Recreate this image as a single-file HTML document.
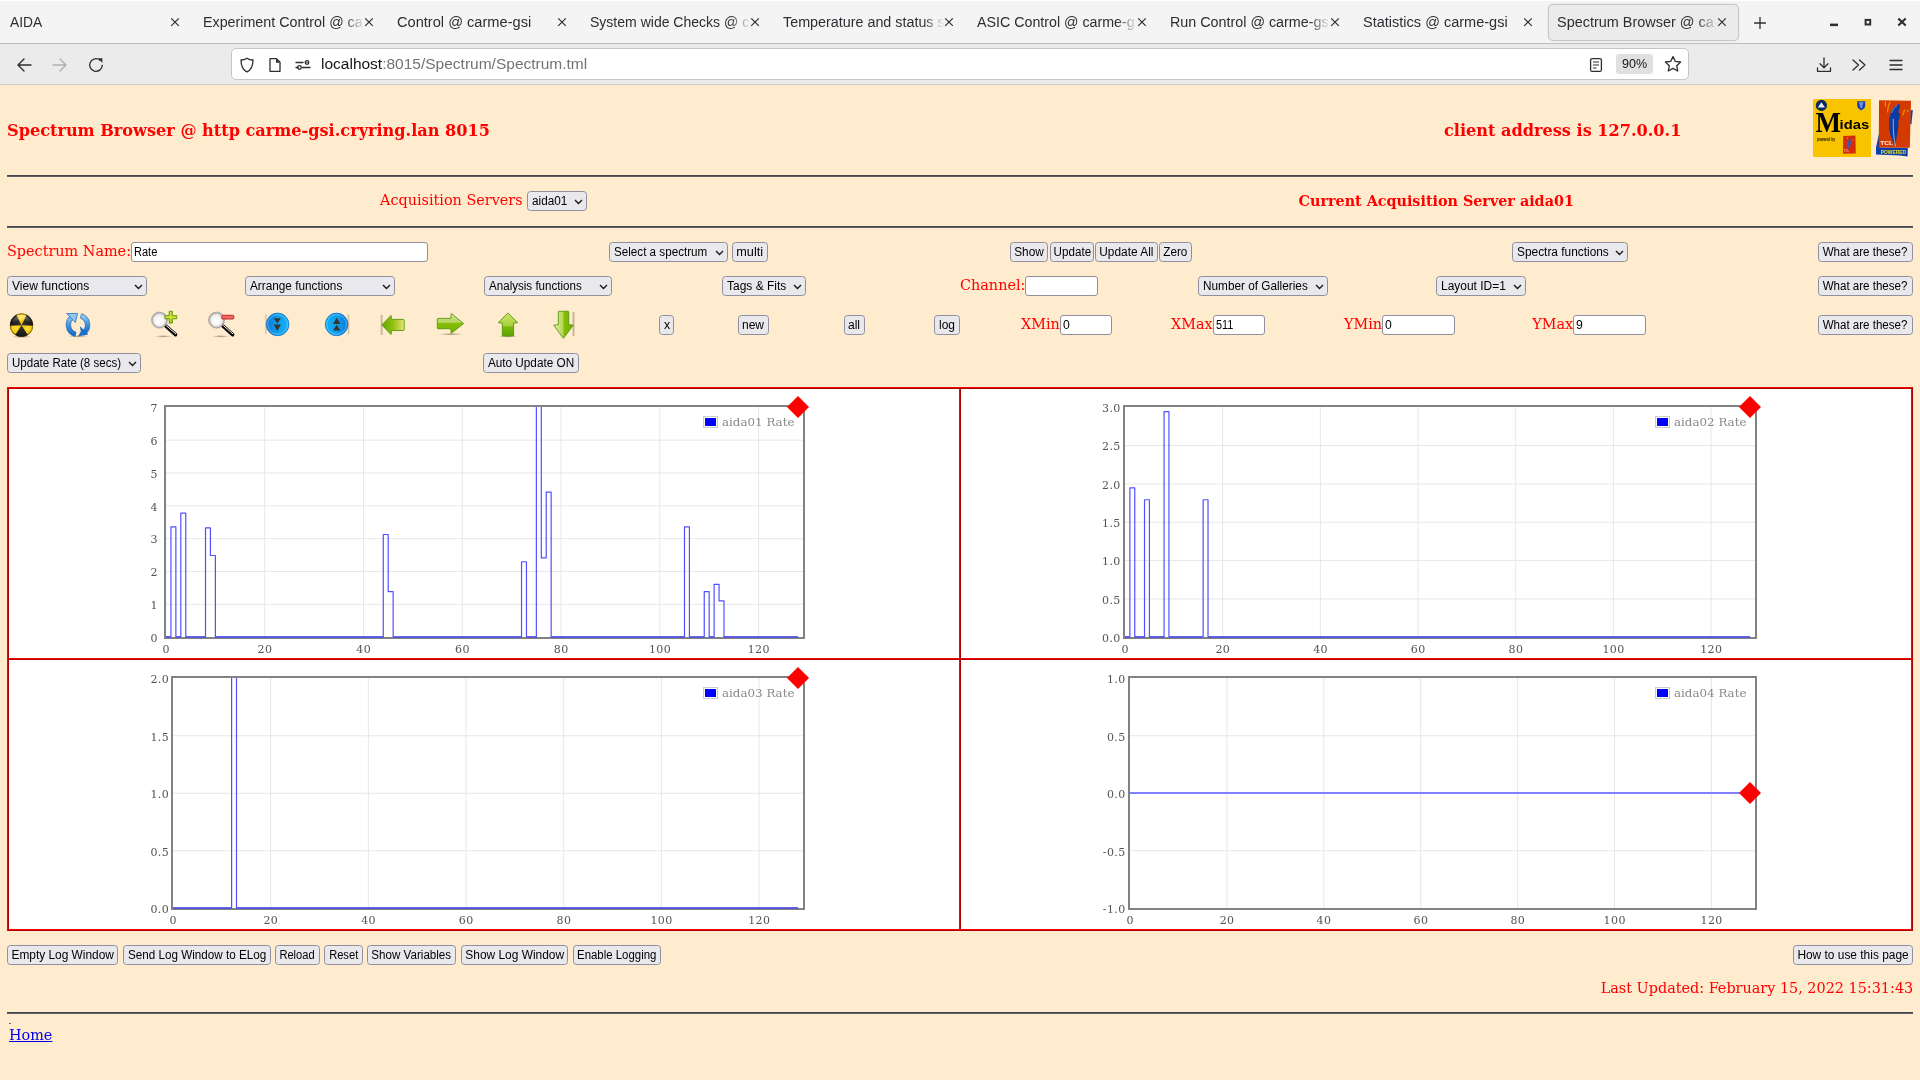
<!DOCTYPE html>
<html lang="en"><head><meta charset="utf-8"><title>Spectrum Browser @ carme-gsi</title>
<style>
*{box-sizing:border-box}
html,body{margin:0;padding:0}
body{width:1920px;height:1080px;overflow:hidden;position:relative;background:#ffebcd;font-family:"DejaVu Serif","Liberation Serif",serif;font-size:14.4px;color:#ff0000}
#root{position:absolute;left:0;top:0;width:1920px;height:1080px;will-change:transform}
.a{position:absolute;white-space:nowrap}
.ui{font-family:"Liberation Sans","DejaVu Sans",sans-serif;color:#15141a}
#tabbar{left:0;top:0;width:1920px;height:43px;background:#f4f4f4;border-top:1px solid #fff}
#tabline{left:0;top:43px;width:1920px;height:1px;background:#bdbdbd}
#navbar{left:0;top:44px;width:1920px;height:40px;background:#ebebeb}
#navline{left:0;top:84px;width:1920px;height:1px;background:#d4d0c8}
.tab{top:0;height:43px;font-size:15.2px;line-height:44.5px;color:#2b2f33;overflow:hidden}
.fade{-webkit-mask-image:linear-gradient(to right,#000 calc(100% - 22px),transparent 100%);mask-image:linear-gradient(to right,#000 calc(100% - 22px),transparent 100%)}
.tx{top:0;height:43px;line-height:43px}
#atab{left:1548px;top:3.5px;width:191px;height:37px;background:#ebebeb;border:1px solid #c6c6cc;border-radius:5px;box-shadow:0 0 2px rgba(0,0,0,.12)}
#url{left:231px;top:48px;width:1458px;height:32px;background:#fff;border:1px solid #c6c6c6;border-radius:5px}
.btn{height:20px;border:1px solid #8f8f9d;border-radius:3.5px;background:#e9e9ed;font-family:"Liberation Sans","DejaVu Sans",sans-serif;font-size:12px;color:#000;line-height:19px;text-align:center;padding:0}
.sel{height:20px;border:1px solid #8f8f9d;border-radius:3.5px;background:#e9e9ed;font-family:"Liberation Sans","DejaVu Sans",sans-serif;font-size:12px;color:#000;line-height:19px;padding-left:4px}
.inp{height:20px;border:1px solid #8f8f9d;border-radius:3px;background:#fff;font-family:"Liberation Sans","DejaVu Sans",sans-serif;font-size:12px;color:#000;line-height:19px;padding-left:2px}
.hr{left:7px;width:1906px;height:2px;background:linear-gradient(#43464a 50%,#5c5f63 50%)}
.lbl{font-size:14.4px;line-height:20px;height:20px}
</style></head>
<body>
<div id="root">
<div class="a" id="tabbar"></div><div class="a" id="tabline"></div><div class="a" id="navbar"></div><div class="a" id="navline"></div>
<div class="a" id="atab"></div>
<div class="a ui tab" style="left:10px;width:172.5px;transform:scaleX(0.9100);transform-origin:left">AIDA</div>
<svg class="a" style="left:170.2px;top:17px" width="10" height="10" viewBox="0 0 10 10"><path d="M1.2 1.3L8.8 8.9M8.8 1.3L1.2 8.9" stroke="#2e2e2e" stroke-width="1.2" fill="none"/></svg>
<div class="a ui tab fade" style="left:203px;width:171.8px;transform:scaleX(0.9400);transform-origin:left">Experiment Control @ ca</div>
<svg class="a" style="left:364.2px;top:17px" width="10" height="10" viewBox="0 0 10 10"><path d="M1.2 1.3L8.8 8.9M8.8 1.3L1.2 8.9" stroke="#2e2e2e" stroke-width="1.2" fill="none"/></svg>
<div class="a ui tab" style="left:397px;width:163.2px;transform:scaleX(0.9620);transform-origin:left">Control @ carme-gsi</div>
<svg class="a" style="left:557.2px;top:17px" width="10" height="10" viewBox="0 0 10 10"><path d="M1.2 1.3L8.8 8.9M8.8 1.3L1.2 8.9" stroke="#2e2e2e" stroke-width="1.2" fill="none"/></svg>
<div class="a ui tab fade" style="left:590px;width:173.9px;transform:scaleX(0.9232);transform-origin:left">System wide Checks @ c</div>
<svg class="a" style="left:750.2px;top:17px" width="10" height="10" viewBox="0 0 10 10"><path d="M1.2 1.3L8.8 8.9M8.8 1.3L1.2 8.9" stroke="#2e2e2e" stroke-width="1.2" fill="none"/></svg>
<div class="a ui tab fade" style="left:783px;width:171.2px;transform:scaleX(0.9434);transform-origin:left">Temperature and status s</div>
<svg class="a" style="left:944.2px;top:17px" width="10" height="10" viewBox="0 0 10 10"><path d="M1.2 1.3L8.8 8.9M8.8 1.3L1.2 8.9" stroke="#2e2e2e" stroke-width="1.2" fill="none"/></svg>
<div class="a ui tab fade" style="left:977px;width:171.2px;transform:scaleX(0.9375);transform-origin:left">ASIC Control @ carme-g</div>
<svg class="a" style="left:1137.2px;top:17px" width="10" height="10" viewBox="0 0 10 10"><path d="M1.2 1.3L8.8 8.9M8.8 1.3L1.2 8.9" stroke="#2e2e2e" stroke-width="1.2" fill="none"/></svg>
<div class="a ui tab fade" style="left:1170px;width:170.1px;transform:scaleX(0.9434);transform-origin:left">Run Control @ carme-gs</div>
<svg class="a" style="left:1330.2px;top:17px" width="10" height="10" viewBox="0 0 10 10"><path d="M1.2 1.3L8.8 8.9M8.8 1.3L1.2 8.9" stroke="#2e2e2e" stroke-width="1.2" fill="none"/></svg>
<div class="a ui tab" style="left:1363px;width:164.2px;transform:scaleX(0.9560);transform-origin:left">Statistics @ carme-gsi</div>
<svg class="a" style="left:1523.2px;top:17px" width="10" height="10" viewBox="0 0 10 10"><path d="M1.2 1.3L8.8 8.9M8.8 1.3L1.2 8.9" stroke="#2e2e2e" stroke-width="1.2" fill="none"/></svg>
<div class="a ui tab fade" style="left:1557px;width:168.8px;transform:scaleX(0.9506);transform-origin:left">Spectrum Browser @ ca</div>
<svg class="a" style="left:1717.2px;top:17px" width="10" height="10" viewBox="0 0 10 10"><path d="M1.2 1.3L8.8 8.9M8.8 1.3L1.2 8.9" stroke="#2e2e2e" stroke-width="1.2" fill="none"/></svg>
<svg class="a" style="left:1753.7px;top:16.8px" width="12" height="12" viewBox="0 0 12 12"><path d="M6 0.1V11.9M0.1 6H11.9" stroke="#2e2e2e" stroke-width="1.3" fill="none"/></svg>
<svg class="a" style="left:1828px;top:18px" width="12" height="10" viewBox="0 0 12 10"><rect x="2" y="5.6" width="8" height="2.5" fill="#2e2e2e"/></svg>
<svg class="a" style="left:1862px;top:16px" width="12" height="12" viewBox="0 0 12 12"><rect x="3.6" y="3.9" width="4.6" height="4.6" fill="none" stroke="#2e2e2e" stroke-width="2"/></svg>
<svg class="a" style="left:1897px;top:17px" width="10" height="10" viewBox="0 0 10 10"><path d="M1.3 1.4L8.7 8.6M8.7 1.4L1.3 8.6" stroke="#2e2e2e" stroke-width="2.1" fill="none"/></svg>
<svg class="a" style="left:16px;top:56.7px" width="16" height="16" viewBox="0 0 16 16"><path d="M15 8H2M8 2L2 8L8 14" stroke="#2e2e2e" stroke-width="1.4" fill="none" stroke-linecap="round" stroke-linejoin="round"/></svg>
<svg class="a" style="left:52px;top:56.7px" width="16" height="16" viewBox="0 0 16 16"><path d="M1 8H14M8 2L14 8L8 14" stroke="#b0b0b0" stroke-width="1.4" fill="none" stroke-linecap="round" stroke-linejoin="round"/></svg>
<svg class="a" style="left:88px;top:56.7px" width="16" height="16" viewBox="0 0 16 16"><path d="M14.3 8.3A6.3 6.3 0 1 1 12.1 3.2" stroke="#2e2e2e" stroke-width="1.35" fill="none" stroke-linecap="round"/><path d="M10 1.3H14.4V5.9Z" fill="#2e2e2e"/></svg>
<div class="a" id="url"></div>
<svg class="a" style="left:239px;top:56.7px" width="16" height="16" viewBox="0 0 16 16"><path d="M8 1.2C6 2.6 4 3 2 3C2 9 4 13 8 14.8C12 13 14 9 14 3C12 3 10 2.6 8 1.2Z" stroke="#2e2e2e" stroke-width="1.3" fill="none" stroke-linejoin="round"/></svg>
<svg class="a" style="left:267px;top:56.7px" width="16" height="16" viewBox="0 0 16 16"><path d="M3 1.7H9.5L13 5.2V14.3H3Z" stroke="#2e2e2e" stroke-width="1.3" fill="none" stroke-linejoin="round"/><path d="M9 1.7V5.7H13Z" fill="#2e2e2e"/></svg>
<svg class="a" style="left:295px;top:56.7px" width="16" height="16" viewBox="0 0 16 16"><path d="M1 5.5H8M12 5.5H12M1 10.5H3M7 10.5H15" stroke="#2e2e2e" stroke-width="1.3" fill="none" stroke-linecap="round"/><circle cx="12" cy="5.5" r="1.8" stroke="#2e2e2e" stroke-width="1.3" fill="none"/><circle cx="4.5" cy="10.5" r="1.8" stroke="#2e2e2e" stroke-width="1.3" fill="none"/></svg>
<div class="a ui" style="left:321px;top:48px;height:32px;line-height:32px;font-size:15.5px;color:#15141a">localhost<span style="color:#737373">:8015/Spectrum/Spectrum.tml</span></div>
<svg class="a" style="left:1588px;top:56.7px" width="16" height="16" viewBox="0 0 16 16"><rect x="2.6" y="1.6" width="10.8" height="12.8" rx="1.5" stroke="#2e2e2e" stroke-width="1.3" fill="none"/><path d="M5 5H11M5 8H11M5 11H8.5" stroke="#2e2e2e" stroke-width="1.2" fill="none"/></svg>
<div class="a ui" style="left:1616px;top:54px;width:37px;height:20px;background:#e0e0e0;border-radius:3px;font-size:12.5px;line-height:20px;text-align:center;color:#15141a">90%</div>
<svg class="a" style="left:1664px;top:55px" width="18" height="18" viewBox="0 0 18 18"><path d="M9 1.5L11.3 6.4L16.6 7L12.7 10.7L13.7 16L9 13.4L4.3 16L5.3 10.7L1.4 7L6.7 6.4Z" stroke="#2e2e2e" stroke-width="1.3" fill="none" stroke-linejoin="round"/></svg>
<svg class="a" style="left:1816px;top:56.7px" width="16" height="16" viewBox="0 0 16 16"><path d="M8 1V10.5M4 6.8L8 10.8L12 6.8M1.5 11V14.3H14.5V11" stroke="#2e2e2e" stroke-width="1.3" fill="none" stroke-linecap="round" stroke-linejoin="round"/></svg>
<svg class="a" style="left:1851px;top:56.7px" width="16" height="16" viewBox="0 0 16 16"><path d="M2 3L7.5 8L2 13M8.5 3L14 8L8.5 13" stroke="#2e2e2e" stroke-width="1.3" fill="none" stroke-linecap="round" stroke-linejoin="round"/></svg>
<svg class="a" style="left:1888px;top:56.7px" width="16" height="16" viewBox="0 0 16 16"><path d="M2 3.5H14M2 8H14M2 12.5H14" stroke="#2e2e2e" stroke-width="1.3" fill="none" stroke-linecap="round"/></svg>
<div class="a" style="left:7px;top:119px;font-size:16.13px;font-weight:bold;line-height:24px">Spectrum Browser @ http carme-gsi.cryring.lan 8015</div>
<div class="a" style="left:1444px;top:119px;font-size:16.13px;font-weight:bold;line-height:24px">client address is 127.0.0.1</div>
<div class="a hr" style="top:175px"></div>
<div class="a lbl" style="left:380px;top:190px">Acquisition Servers</div>
<div class="a" style="left:1298.6px;top:191px;font-weight:bold;font-size:14.33px;line-height:20px">Current Acquisition Server aida01</div>
<div class="a hr" style="top:226px"></div>
<div class="a sel" style="left:527px;top:191px;width:60px"><span style="display:inline-block;transform:scaleX(0.979);transform-origin:left">aida01</span></div>
<svg class="a" style="left:573.8px;top:198.7px" width="9" height="6" viewBox="0 0 9 6"><path d="M1 1L4.5 4.5L8 1" stroke="#1a1a1a" stroke-width="1.4" fill="none"/></svg>
<div class="a lbl" style="left:7.0px;top:241px">Spectrum Name:</div>
<div class="a inp" style="left:131px;top:242px;width:297px"><span style="display:inline-block;transform:scaleX(0.919);transform-origin:left">Rate</span></div>
<div class="a sel" style="left:609px;top:242px;width:119px"><span style="display:inline-block;transform:scaleX(0.971);transform-origin:left">Select a spectrum</span></div>
<svg class="a" style="left:714.8px;top:249.7px" width="9" height="6" viewBox="0 0 9 6"><path d="M1 1L4.5 4.5L8 1" stroke="#1a1a1a" stroke-width="1.4" fill="none"/></svg>
<div class="a btn" style="left:732px;top:242px;width:36px"><span style="display:inline-block;transform:scaleX(1.057);transform-origin:center">multi</span></div>
<div class="a btn" style="left:1010px;top:242px;width:38px"><span style="display:inline-block;transform:scaleX(0.984);transform-origin:center">Show</span></div>
<div class="a btn" style="left:1050px;top:242px;width:44px"><span style="display:inline-block;transform:scaleX(0.969);transform-origin:center">Update</span></div>
<div class="a btn" style="left:1095px;top:242px;width:63px"><span style="display:inline-block;transform:scaleX(0.989);transform-origin:center">Update All</span></div>
<div class="a btn" style="left:1159px;top:242px;width:33px"><span style="display:inline-block;transform:scaleX(0.976);transform-origin:center">Zero</span></div>
<div class="a sel" style="left:1512px;top:242px;width:116px"><span style="display:inline-block;transform:scaleX(0.990);transform-origin:left">Spectra functions</span></div>
<svg class="a" style="left:1614.8px;top:249.7px" width="9" height="6" viewBox="0 0 9 6"><path d="M1 1L4.5 4.5L8 1" stroke="#1a1a1a" stroke-width="1.4" fill="none"/></svg>
<div class="a btn" style="left:1818px;top:242px;width:95px"><span style="display:inline-block;transform:scaleX(0.963);transform-origin:center">What are these?</span></div>
<div class="a sel" style="left:7px;top:276px;width:140px"><span style="display:inline-block;transform:scaleX(1.002);transform-origin:left">View functions</span></div>
<svg class="a" style="left:133.8px;top:283.7px" width="9" height="6" viewBox="0 0 9 6"><path d="M1 1L4.5 4.5L8 1" stroke="#1a1a1a" stroke-width="1.4" fill="none"/></svg>
<div class="a sel" style="left:245px;top:276px;width:150px"><span style="display:inline-block;transform:scaleX(0.981);transform-origin:left">Arrange functions</span></div>
<svg class="a" style="left:381.8px;top:283.7px" width="9" height="6" viewBox="0 0 9 6"><path d="M1 1L4.5 4.5L8 1" stroke="#1a1a1a" stroke-width="1.4" fill="none"/></svg>
<div class="a sel" style="left:484px;top:276px;width:128px"><span style="display:inline-block;transform:scaleX(0.966);transform-origin:left">Analysis functions</span></div>
<svg class="a" style="left:598.8px;top:283.7px" width="9" height="6" viewBox="0 0 9 6"><path d="M1 1L4.5 4.5L8 1" stroke="#1a1a1a" stroke-width="1.4" fill="none"/></svg>
<div class="a sel" style="left:722px;top:276px;width:84px"><span style="display:inline-block;transform:scaleX(0.999);transform-origin:left">Tags &amp; Fits</span></div>
<svg class="a" style="left:792.8px;top:283.7px" width="9" height="6" viewBox="0 0 9 6"><path d="M1 1L4.5 4.5L8 1" stroke="#1a1a1a" stroke-width="1.4" fill="none"/></svg>
<div class="a lbl" style="left:960.0px;top:275px">Channel:</div>
<div class="a inp" style="left:1025px;top:276px;width:73px"></div>
<div class="a sel" style="left:1198px;top:276px;width:130px"><span style="display:inline-block;transform:scaleX(0.982);transform-origin:left">Number of Galleries</span></div>
<svg class="a" style="left:1314.8px;top:283.7px" width="9" height="6" viewBox="0 0 9 6"><path d="M1 1L4.5 4.5L8 1" stroke="#1a1a1a" stroke-width="1.4" fill="none"/></svg>
<div class="a sel" style="left:1436px;top:276px;width:90px"><span style="display:inline-block;transform:scaleX(0.996);transform-origin:left">Layout ID=1</span></div>
<svg class="a" style="left:1512.8px;top:283.7px" width="9" height="6" viewBox="0 0 9 6"><path d="M1 1L4.5 4.5L8 1" stroke="#1a1a1a" stroke-width="1.4" fill="none"/></svg>
<div class="a btn" style="left:1818px;top:276px;width:95px"><span style="display:inline-block;transform:scaleX(0.963);transform-origin:center">What are these?</span></div>
<div class="a btn" style="left:659px;top:315px;width:15px"><span style="display:inline-block;transform:scaleX(1.033);transform-origin:center">x</span></div>
<div class="a btn" style="left:738px;top:315px;width:31px"><span style="display:inline-block;transform:scaleX(1.002);transform-origin:center">new</span></div>
<div class="a btn" style="left:844px;top:315px;width:21px"><span style="display:inline-block;transform:scaleX(1.003);transform-origin:center">all</span></div>
<div class="a btn" style="left:934px;top:315px;width:26px"><span style="display:inline-block;transform:scaleX(0.999);transform-origin:center">log</span></div>
<div class="a lbl" style="left:1021.0px;top:314px">XMin</div>
<div class="a inp" style="left:1060px;top:315px;width:52px"><span style="display:inline-block;transform:scaleX(1.017);transform-origin:left">0</span></div>
<div class="a lbl" style="left:1171.0px;top:314px">XMax</div>
<div class="a inp" style="left:1213px;top:315px;width:52px"><span style="display:inline-block;transform:scaleX(0.904);transform-origin:left">511</span></div>
<div class="a lbl" style="left:1344.0px;top:314px">YMin</div>
<div class="a inp" style="left:1382px;top:315px;width:73px"><span style="display:inline-block;transform:scaleX(1.017);transform-origin:left">0</span></div>
<div class="a lbl" style="left:1532.2px;top:314px">YMax</div>
<div class="a inp" style="left:1573px;top:315px;width:73px"><span style="display:inline-block;transform:scaleX(1.017);transform-origin:left">9</span></div>
<div class="a btn" style="left:1818px;top:315px;width:95px"><span style="display:inline-block;transform:scaleX(0.963);transform-origin:center">What are these?</span></div>
<div class="a sel" style="left:7px;top:353px;width:134px"><span style="display:inline-block;transform:scaleX(0.962);transform-origin:left">Update Rate (8 secs)</span></div>
<svg class="a" style="left:127.8px;top:360.7px" width="9" height="6" viewBox="0 0 9 6"><path d="M1 1L4.5 4.5L8 1" stroke="#1a1a1a" stroke-width="1.4" fill="none"/></svg>
<div class="a btn" style="left:483px;top:353px;width:96px"><span style="display:inline-block;transform:scaleX(0.980);transform-origin:center">Auto Update ON</span></div>
<div class="a" style="left:7px;top:387px;width:1906px;height:544px;background:#fff;border:1px solid;border-color:#ff0000 #b20000 #b20000 #ff0000"></div>
<div class="a" style="left:8px;top:388px;width:952px;height:271px;border:1px solid;border-color:#b20000 #ff0000 #ff0000 #b20000"></div>
<div class="a" style="left:8px;top:659px;width:952px;height:271px;border:1px solid;border-color:#b20000 #ff0000 #ff0000 #b20000"></div>
<div class="a" style="left:960px;top:388px;width:952px;height:271px;border:1px solid;border-color:#b20000 #ff0000 #ff0000 #b20000"></div>
<div class="a" style="left:960px;top:659px;width:952px;height:271px;border:1px solid;border-color:#b20000 #ff0000 #ff0000 #b20000"></div>
<svg class="a" style="left:0;top:0" width="1920" height="1080" viewBox="0 0 1920 1080" font-family="'DejaVu Serif','Liberation Serif',serif" font-size="11">
<path d="M264.76 407V637" stroke="#e7e7e7" stroke-width="1"/>
<path d="M363.52 407V637" stroke="#e7e7e7" stroke-width="1"/>
<path d="M462.28 407V637" stroke="#e7e7e7" stroke-width="1"/>
<path d="M561.04 407V637" stroke="#e7e7e7" stroke-width="1"/>
<path d="M659.8 407V637" stroke="#e7e7e7" stroke-width="1"/>
<path d="M758.56 407V637" stroke="#e7e7e7" stroke-width="1"/>
<path d="M166 604.39H803" stroke="#e7e7e7" stroke-width="1"/>
<path d="M166 571.54H803" stroke="#e7e7e7" stroke-width="1"/>
<path d="M166 538.68H803" stroke="#e7e7e7" stroke-width="1"/>
<path d="M166 505.82H803" stroke="#e7e7e7" stroke-width="1"/>
<path d="M166 472.96H803" stroke="#e7e7e7" stroke-width="1"/>
<path d="M166 440.11H803" stroke="#e7e7e7" stroke-width="1"/>
<rect x="165" y="406" width="639" height="232" fill="none" stroke="#828282" stroke-width="2"/>
<clipPath id="c166407"><rect x="166" y="407" width="637" height="231.2"/></clipPath>
<g clip-path="url(#c166407)">
<path d="M166 637L170.94 637L170.94 526.93L175.88 526.93L175.88 637L180.81 637L180.81 513.13L185.75 513.13L185.75 637L205.5 637L205.5 527.91L210.44 527.91L210.44 555.51L215.38 555.51L215.38 637L383.27 637L383.27 534.49L388.21 534.49L388.21 591.66L393.15 591.66L393.15 637L521.53 637L521.53 561.76L526.47 561.76L526.47 637L536.35 637L536.35 404L541.29 404L541.29 557.81L546.22 557.81L546.22 492.1L551.16 492.1L551.16 637L684.49 637L684.49 526.93L689.43 526.93L689.43 637L704.24 637L704.24 591.66L709.18 591.66L709.18 637L714.12 637L714.12 584.43L719.05 584.43L719.05 600.86L723.99 600.86L723.99 637L798.06 637" stroke="#5050ff" stroke-width="1.2" fill="none" stroke-linejoin="round"/>
<path d="M166 637H170.94M175.88 637H180.81M185.75 637H205.5M215.38 637H383.27M393.15 637H521.53M526.47 637H536.35M551.16 637H684.49M689.43 637H704.24M709.18 637H714.12M723.99 637H798.06" stroke="#5050e2" stroke-width="1.7" fill="none"/>
</g>
<text x="166.2" y="653" text-anchor="middle" letter-spacing="0.4" fill="#545454">0</text>
<text x="264.96" y="653" text-anchor="middle" letter-spacing="0.4" fill="#545454">20</text>
<text x="363.72" y="653" text-anchor="middle" letter-spacing="0.4" fill="#545454">40</text>
<text x="462.48" y="653" text-anchor="middle" letter-spacing="0.4" fill="#545454">60</text>
<text x="561.24" y="653" text-anchor="middle" letter-spacing="0.4" fill="#545454">80</text>
<text x="660" y="653" text-anchor="middle" letter-spacing="0.4" fill="#545454">100</text>
<text x="758.76" y="653" text-anchor="middle" letter-spacing="0.4" fill="#545454">120</text>
<text x="157.8" y="642" text-anchor="end" letter-spacing="0.4" fill="#545454">0</text>
<text x="157.8" y="609.14" text-anchor="end" letter-spacing="0.4" fill="#545454">1</text>
<text x="157.8" y="576.29" text-anchor="end" letter-spacing="0.4" fill="#545454">2</text>
<text x="157.8" y="543.43" text-anchor="end" letter-spacing="0.4" fill="#545454">3</text>
<text x="157.8" y="510.57" text-anchor="end" letter-spacing="0.4" fill="#545454">4</text>
<text x="157.8" y="477.71" text-anchor="end" letter-spacing="0.4" fill="#545454">5</text>
<text x="157.8" y="444.86" text-anchor="end" letter-spacing="0.4" fill="#545454">6</text>
<text x="157.8" y="412" text-anchor="end" letter-spacing="0.4" fill="#545454">7</text>
<rect x="703.5" y="416.5" width="14" height="11" fill="#fff" stroke="#ccc" stroke-width="1"/>
<rect x="705" y="418" width="11" height="8" fill="#0000ff"/>
<text x="722" y="426" font-size="11" textLength="72.5" lengthAdjust="spacingAndGlyphs" fill="#8a8a8a">aida01 Rate</text>
<path d="M798 396L809 407L798 418L787 407Z" fill="#ff0000"/>
<path d="M1222.67 407V637" stroke="#e7e7e7" stroke-width="1"/>
<path d="M1320.35 407V637" stroke="#e7e7e7" stroke-width="1"/>
<path d="M1418.02 407V637" stroke="#e7e7e7" stroke-width="1"/>
<path d="M1515.7 407V637" stroke="#e7e7e7" stroke-width="1"/>
<path d="M1613.37 407V637" stroke="#e7e7e7" stroke-width="1"/>
<path d="M1711.05 407V637" stroke="#e7e7e7" stroke-width="1"/>
<path d="M1125 598.92H1755" stroke="#e7e7e7" stroke-width="1"/>
<path d="M1125 560.58H1755" stroke="#e7e7e7" stroke-width="1"/>
<path d="M1125 522.25H1755" stroke="#e7e7e7" stroke-width="1"/>
<path d="M1125 483.92H1755" stroke="#e7e7e7" stroke-width="1"/>
<path d="M1125 445.58H1755" stroke="#e7e7e7" stroke-width="1"/>
<rect x="1124" y="406" width="632" height="232" fill="none" stroke="#828282" stroke-width="2"/>
<clipPath id="c1125407"><rect x="1125" y="407" width="630" height="231.2"/></clipPath>
<g clip-path="url(#c1125407)">
<path d="M1125 637L1129.88 637L1129.88 487.96L1134.77 487.96L1134.77 637L1144.53 637L1144.53 499.77L1149.42 499.77L1149.42 637L1164.07 637L1164.07 411.6L1168.95 411.6L1168.95 637L1203.14 637L1203.14 499.77L1208.02 499.77L1208.02 637L1750.12 637" stroke="#5050ff" stroke-width="1.2" fill="none" stroke-linejoin="round"/>
<path d="M1125 637H1129.88M1134.77 637H1144.53M1149.42 637H1164.07M1168.95 637H1203.14M1208.02 637H1750.12" stroke="#5050e2" stroke-width="1.7" fill="none"/>
</g>
<text x="1125.2" y="653" text-anchor="middle" letter-spacing="0.4" fill="#545454">0</text>
<text x="1222.87" y="653" text-anchor="middle" letter-spacing="0.4" fill="#545454">20</text>
<text x="1320.55" y="653" text-anchor="middle" letter-spacing="0.4" fill="#545454">40</text>
<text x="1418.22" y="653" text-anchor="middle" letter-spacing="0.4" fill="#545454">60</text>
<text x="1515.9" y="653" text-anchor="middle" letter-spacing="0.4" fill="#545454">80</text>
<text x="1613.57" y="653" text-anchor="middle" letter-spacing="0.4" fill="#545454">100</text>
<text x="1711.25" y="653" text-anchor="middle" letter-spacing="0.4" fill="#545454">120</text>
<text x="1120.7" y="642" text-anchor="end" letter-spacing="0.4" fill="#545454">0.0</text>
<text x="1120.7" y="603.67" text-anchor="end" letter-spacing="0.4" fill="#545454">0.5</text>
<text x="1120.7" y="565.33" text-anchor="end" letter-spacing="0.4" fill="#545454">1.0</text>
<text x="1120.7" y="527" text-anchor="end" letter-spacing="0.4" fill="#545454">1.5</text>
<text x="1120.7" y="488.67" text-anchor="end" letter-spacing="0.4" fill="#545454">2.0</text>
<text x="1120.7" y="450.33" text-anchor="end" letter-spacing="0.4" fill="#545454">2.5</text>
<text x="1120.7" y="412" text-anchor="end" letter-spacing="0.4" fill="#545454">3.0</text>
<rect x="1655.5" y="416.5" width="14" height="11" fill="#fff" stroke="#ccc" stroke-width="1"/>
<rect x="1657" y="418" width="11" height="8" fill="#0000ff"/>
<text x="1674" y="426" font-size="11" textLength="72.5" lengthAdjust="spacingAndGlyphs" fill="#8a8a8a">aida02 Rate</text>
<path d="M1750 396L1761 407L1750 418L1739 407Z" fill="#ff0000"/>
<path d="M270.67 678V908" stroke="#e7e7e7" stroke-width="1"/>
<path d="M368.35 678V908" stroke="#e7e7e7" stroke-width="1"/>
<path d="M466.02 678V908" stroke="#e7e7e7" stroke-width="1"/>
<path d="M563.7 678V908" stroke="#e7e7e7" stroke-width="1"/>
<path d="M661.37 678V908" stroke="#e7e7e7" stroke-width="1"/>
<path d="M759.05 678V908" stroke="#e7e7e7" stroke-width="1"/>
<path d="M173 850.75H803" stroke="#e7e7e7" stroke-width="1"/>
<path d="M173 793.25H803" stroke="#e7e7e7" stroke-width="1"/>
<path d="M173 735.75H803" stroke="#e7e7e7" stroke-width="1"/>
<rect x="172" y="677" width="632" height="232" fill="none" stroke="#828282" stroke-width="2"/>
<clipPath id="c173678"><rect x="173" y="678" width="630" height="231.2"/></clipPath>
<g clip-path="url(#c173678)">
<path d="M173 908L231.6 908L231.6 675L236.49 675L236.49 908L798.12 908" stroke="#5050ff" stroke-width="1.2" fill="none" stroke-linejoin="round"/>
<path d="M173 908H231.6M236.49 908H798.12" stroke="#5050e2" stroke-width="1.7" fill="none"/>
</g>
<text x="173.2" y="924" text-anchor="middle" letter-spacing="0.4" fill="#545454">0</text>
<text x="270.87" y="924" text-anchor="middle" letter-spacing="0.4" fill="#545454">20</text>
<text x="368.55" y="924" text-anchor="middle" letter-spacing="0.4" fill="#545454">40</text>
<text x="466.22" y="924" text-anchor="middle" letter-spacing="0.4" fill="#545454">60</text>
<text x="563.9" y="924" text-anchor="middle" letter-spacing="0.4" fill="#545454">80</text>
<text x="661.57" y="924" text-anchor="middle" letter-spacing="0.4" fill="#545454">100</text>
<text x="759.25" y="924" text-anchor="middle" letter-spacing="0.4" fill="#545454">120</text>
<text x="169.1" y="913" text-anchor="end" letter-spacing="0.4" fill="#545454">0.0</text>
<text x="169.1" y="855.5" text-anchor="end" letter-spacing="0.4" fill="#545454">0.5</text>
<text x="169.1" y="798" text-anchor="end" letter-spacing="0.4" fill="#545454">1.0</text>
<text x="169.1" y="740.5" text-anchor="end" letter-spacing="0.4" fill="#545454">1.5</text>
<text x="169.1" y="683" text-anchor="end" letter-spacing="0.4" fill="#545454">2.0</text>
<rect x="703.5" y="687.5" width="14" height="11" fill="#fff" stroke="#ccc" stroke-width="1"/>
<rect x="705" y="689" width="11" height="8" fill="#0000ff"/>
<text x="722" y="697" font-size="11" textLength="72.5" lengthAdjust="spacingAndGlyphs" fill="#8a8a8a">aida03 Rate</text>
<path d="M798 667L809 678L798 689L787 678Z" fill="#ff0000"/>
<path d="M1226.9 678V908" stroke="#e7e7e7" stroke-width="1"/>
<path d="M1323.8 678V908" stroke="#e7e7e7" stroke-width="1"/>
<path d="M1420.7 678V908" stroke="#e7e7e7" stroke-width="1"/>
<path d="M1517.6 678V908" stroke="#e7e7e7" stroke-width="1"/>
<path d="M1614.5 678V908" stroke="#e7e7e7" stroke-width="1"/>
<path d="M1711.4 678V908" stroke="#e7e7e7" stroke-width="1"/>
<path d="M1130 850.75H1755" stroke="#e7e7e7" stroke-width="1"/>
<path d="M1130 793.25H1755" stroke="#e7e7e7" stroke-width="1"/>
<path d="M1130 735.75H1755" stroke="#e7e7e7" stroke-width="1"/>
<rect x="1129" y="677" width="627" height="232" fill="none" stroke="#828282" stroke-width="2"/>
<clipPath id="c1130678"><rect x="1130" y="678" width="625" height="231.2"/></clipPath>
<g clip-path="url(#c1130678)">
<path d="M1130 793L1750.16 793" stroke="#8080ff" stroke-width="2" fill="none" stroke-linejoin="round"/>
</g>
<text x="1130.2" y="924" text-anchor="middle" letter-spacing="0.4" fill="#545454">0</text>
<text x="1227.1" y="924" text-anchor="middle" letter-spacing="0.4" fill="#545454">20</text>
<text x="1324" y="924" text-anchor="middle" letter-spacing="0.4" fill="#545454">40</text>
<text x="1420.9" y="924" text-anchor="middle" letter-spacing="0.4" fill="#545454">60</text>
<text x="1517.8" y="924" text-anchor="middle" letter-spacing="0.4" fill="#545454">80</text>
<text x="1614.7" y="924" text-anchor="middle" letter-spacing="0.4" fill="#545454">100</text>
<text x="1711.6" y="924" text-anchor="middle" letter-spacing="0.4" fill="#545454">120</text>
<text x="1125.6000000000001" y="913" text-anchor="end" letter-spacing="0.4" fill="#545454">-1.0</text>
<text x="1125.6000000000001" y="855.5" text-anchor="end" letter-spacing="0.4" fill="#545454">-0.5</text>
<text x="1125.6000000000001" y="798" text-anchor="end" letter-spacing="0.4" fill="#545454">0.0</text>
<text x="1125.6000000000001" y="740.5" text-anchor="end" letter-spacing="0.4" fill="#545454">0.5</text>
<text x="1125.6000000000001" y="683" text-anchor="end" letter-spacing="0.4" fill="#545454">1.0</text>
<rect x="1655.5" y="687.5" width="14" height="11" fill="#fff" stroke="#ccc" stroke-width="1"/>
<rect x="1657" y="689" width="11" height="8" fill="#0000ff"/>
<text x="1674" y="697" font-size="11" textLength="72.5" lengthAdjust="spacingAndGlyphs" fill="#8a8a8a">aida04 Rate</text>
<path d="M1750 782L1761 793L1750 804L1739 793Z" fill="#ff0000"/>
</svg>
<svg class="a" style="left:0;top:0" width="1920" height="400" viewBox="0 0 1920 400">
<rect x="1813" y="99" width="58" height="58" fill="#f8c400"/>
<circle cx="1821.4" cy="105.4" r="5.6" fill="#0c2a5c"/>
<path d="M1821.4 102.3L1825 107.6H1817.8Z" fill="#e8eef8"/>
<path d="M1857.2 101.2H1865.2V105.6Q1865.2 108.6 1861.2 110.4Q1857.2 108.6 1857.2 105.6Z" fill="#1840b4"/>
<path d="M1859.2 103H1863.2M1859.6 105H1862.8M1861.2 106V108" stroke="#e8eef8" stroke-width="0.9"/>
<text x="1815.4" y="132" font-family="'Liberation Serif',serif" font-weight="bold" font-size="29.5" textLength="25.5" lengthAdjust="spacingAndGlyphs" fill="#000">M</text>
<text x="1839.6" y="129.2" font-family="'Liberation Sans',sans-serif" font-weight="bold" font-size="13" textLength="29.6" lengthAdjust="spacingAndGlyphs" fill="#000">idas</text>
<text x="1817" y="141.2" font-family="'Liberation Sans',sans-serif" font-weight="bold" font-size="4.6" textLength="18" lengthAdjust="spacingAndGlyphs" fill="#1a1400">powered by</text>
<path d="M1843.2 136L1855.4 135.4L1855.8 153.4L1843 153.8Z" fill="#d42c08"/>
<path d="M1850.2 138.2C1847.6 140.6 1847.4 145.4 1849 149.6C1850.6 146.4 1851.4 141.6 1850.2 138.2Z" fill="#2a5cd0"/>
<path d="M1847 137.4L1847.8 139.2M1852.6 139.6L1853.4 141" stroke="#f8c400" stroke-width="0.6"/>
<text x="1844" y="152.4" font-family="'Liberation Sans',sans-serif" font-weight="bold" font-size="2.6" textLength="5" lengthAdjust="spacingAndGlyphs" fill="#f6b090">TCL</text>
<path d="M1876 147.4L1879 133.4L1880 147.6L1907.8 147.8L1907.6 156.4L1900 155.6L1876 154.6Z" fill="#0a40ac"/>
<path d="M1910.4 110.2L1912.8 110L1911.4 124.4L1910 124Z" fill="#0a40ac"/>
<path d="M1879 100.2L1911 100.8L1909.8 147.8L1878.8 147.4Z" fill="#d23a00"/>
<path d="M1898.4 104C1894.6 106.2 1891.2 109.6 1890.6 113.6C1889.4 117 1889 120.6 1889.4 124C1888.8 128 1889.8 132.4 1890.6 136C1891.8 139.6 1893.4 142.6 1894.8 145.2C1895.6 142.4 1897 136.4 1897.6 132.2C1898.4 128.6 1898.6 125 1898.2 122C1899.6 119 1900.2 116 1900 113.2L1898.2 112.6C1899 110 1900.4 107.6 1900 105.8C1899.6 104.6 1899 104 1898.4 104Z" fill="#0a3ca4"/>
<path d="M1893.4 119C1892.8 127 1893.6 137 1895.4 146.4" stroke="#e8ddd4" stroke-width="0.7" fill="none"/>
<path d="M1897.4 105C1894.6 107 1892.4 110 1891.6 113" stroke="#dfe4f4" stroke-width="0.6" fill="none" opacity="0.8"/>
<path d="M1885.6 101.4Q1884.8 104 1885.6 106.6M1890.4 101.4Q1887.4 105.6 1887.6 112.4M1904.4 109.6Q1904 113 1902.4 115.6M1908 109.6L1907.6 111.8" stroke="#f8b200" stroke-width="0.9" fill="none"/>
<text x="1880.2" y="145.2" font-family="'Liberation Sans',sans-serif" font-weight="bold" font-size="5.8" textLength="13" lengthAdjust="spacingAndGlyphs" fill="#f8ece0">TCL</text>
<text x="1880.8" y="153.7" font-family="'Liberation Sans',sans-serif" font-weight="bold" font-size="6.2" textLength="25.2" lengthAdjust="spacingAndGlyphs" fill="#ecdf20">POWERED</text>
<defs>
<radialGradient id="gY" cx="0.5" cy="0.3" r="0.8"><stop offset="0" stop-color="#ffe23a"/><stop offset="0.6" stop-color="#f5c200"/><stop offset="1" stop-color="#c89200"/></radialGradient>
<radialGradient id="gK" cx="0.5" cy="0.5" r="0.6"><stop offset="0" stop-color="#3a3a36"/><stop offset="1" stop-color="#0c0c0c"/></radialGradient>
<linearGradient id="gGloss" x1="0" y1="0" x2="0" y2="1"><stop offset="0" stop-color="#fff" stop-opacity="0.75"/><stop offset="1" stop-color="#fff" stop-opacity="0"/></linearGradient>
<linearGradient id="gB1" x1="0" y1="0" x2="0" y2="1"><stop offset="0" stop-color="#a8d4f4"/><stop offset="0.5" stop-color="#3f94e0"/><stop offset="1" stop-color="#0d63c4"/></linearGradient>
<radialGradient id="gLens" cx="0.45" cy="0.62" r="0.55"><stop offset="0" stop-color="#ffffff"/><stop offset="0.7" stop-color="#f4f3f2"/><stop offset="1" stop-color="#e2e0de"/></radialGradient>
<linearGradient id="gPlus" x1="0" y1="0" x2="0" y2="1"><stop offset="0" stop-color="#9ac41c"/><stop offset="0.5" stop-color="#c2d82a"/><stop offset="1" stop-color="#74ac10"/></linearGradient>
<linearGradient id="gDisc" x1="0" y1="0" x2="1" y2="0"><stop offset="0" stop-color="#0a78d6"/><stop offset="0.45" stop-color="#0e9ceb"/><stop offset="1" stop-color="#14b2f6"/></linearGradient>
<linearGradient id="gDisc2" x1="1" y1="0" x2="0" y2="0"><stop offset="0" stop-color="#0a78d6"/><stop offset="0.45" stop-color="#0e9ceb"/><stop offset="1" stop-color="#14b2f6"/></linearGradient>
<linearGradient id="gGL" x1="0" y1="0" x2="1" y2="0"><stop offset="0" stop-color="#62a800"/><stop offset="0.5" stop-color="#94c010"/><stop offset="0.9" stop-color="#d4de5c"/><stop offset="1" stop-color="#eef09a"/></linearGradient>
<linearGradient id="gGR" x1="0" y1="0" x2="0" y2="1"><stop offset="0" stop-color="#d4e89c"/><stop offset="0.45" stop-color="#b2d45c"/><stop offset="0.5" stop-color="#86be08"/><stop offset="1" stop-color="#74b000"/></linearGradient>
<linearGradient id="gGU" x1="0" y1="0" x2="0" y2="1"><stop offset="0" stop-color="#cfe468"/><stop offset="0.55" stop-color="#a8d040"/><stop offset="0.6" stop-color="#78b808"/><stop offset="1" stop-color="#5aa400"/></linearGradient>
<linearGradient id="gGD" x1="0" y1="0" x2="1" y2="0"><stop offset="0" stop-color="#e6f0a8"/><stop offset="0.45" stop-color="#b8d858"/><stop offset="0.55" stop-color="#84bc08"/><stop offset="1" stop-color="#72b000"/></linearGradient>
<linearGradient id="gSm" x1="0" y1="0" x2="1" y2="0"><stop offset="0" stop-color="#6a5a40" stop-opacity="0"/><stop offset="0.5" stop-color="#6a5a40" stop-opacity="0.4"/><stop offset="1" stop-color="#6a5a40" stop-opacity="0"/></linearGradient>
<radialGradient id="gSh" cx="0.5" cy="0.5" r="0.5"><stop offset="0" stop-color="#5a4a30" stop-opacity="0.55"/><stop offset="1" stop-color="#5a4a30" stop-opacity="0"/></radialGradient>
</defs>
<ellipse cx="21.5" cy="336.6" rx="10" ry="1.6" fill="url(#gSh)"/>
<circle cx="21.5" cy="325.2" r="11.6" fill="url(#gK)"/>
<path d="M21.50 325.20L26.77 314.86A11.60 11.60 0 0 0 16.23 314.86Z" fill="url(#gY)"/>
<path d="M21.50 325.20L9.92 325.81A11.60 11.60 0 0 0 15.18 334.93Z" fill="url(#gY)"/>
<path d="M21.50 325.20L27.82 334.93A11.60 11.60 0 0 0 33.08 325.81Z" fill="url(#gY)"/>
<circle cx="21.5" cy="325.2" r="11.2" fill="none" stroke="#2a2208" stroke-opacity="0.55" stroke-width="0.8"/>
<path d="M11.30 323.20A10.40 10.40 0 0 1 31.70 323.20A14 9 0 0 0 11.30 323.20Z" fill="url(#gGloss)" opacity="0.55"/>
<ellipse cx="78.0" cy="336.3" rx="10" ry="1.4" fill="url(#gSh)"/>
<path d="M74.95 336.40A11.80 11.80 0 0 1 72.46 314.58L74.53 318.47A7.40 7.40 0 0 0 76.08 332.15Z" fill="url(#gB1)" stroke="#1b62b8" stroke-width="0.7"/>
<path d="M66.6 313.6L77.6 313.4L75.4 322.6L72.6 319.4Z" fill="#8fc6f0" stroke="#1b62b8" stroke-width="0.7" stroke-linejoin="round"/>
<path d="M81.65 313.78A11.80 11.80 0 0 1 84.25 335.01L81.92 331.28A7.40 7.40 0 0 0 80.29 317.96Z" fill="url(#gB1)" stroke="#1b62b8" stroke-width="0.7"/>
<path d="M80.4 327.0L87.8 334.2L78.8 335.8L81.2 331.6Z" fill="#1671d4" stroke="#1b62b8" stroke-width="0.7" stroke-linejoin="round"/>
<ellipse cx="163.5" cy="336.4" rx="9" ry="1.3" fill="url(#gSh)"/>
<path d="M165.80 326.00L175.50 334.70" stroke="#0a0a0a" stroke-width="3.6" stroke-linecap="round"/>
<path d="M166.40 325.70L175.70 333.80" stroke="#f4f4f4" stroke-width="1.0" stroke-linecap="round"/>
<circle cx="159.5" cy="320.1" r="7.3" fill="url(#gLens)" stroke="#b2b0ae" stroke-width="1.6"/>
<circle cx="159.5" cy="320.1" r="8.1" fill="none" stroke="#8e8c8a" stroke-opacity="0.8" stroke-width="0.5"/>
<circle cx="159.5" cy="320.1" r="5.9" fill="none" stroke="#e4e2e0" stroke-width="1.1"/>
<path d="M169.20 311.30h3.2v4.3h4.3v3.2h-4.3v4.3h-3.2v-4.3h-4.3v-3.2h4.3z" fill="url(#gPlus)" stroke="#5c9a0c" stroke-width="0.9" stroke-linejoin="round"/>
<path d="M170.80 312.20v10M165.80 317.20h10" stroke="#e2ea40" stroke-opacity="0.8" stroke-width="1.0"/>
<ellipse cx="220.6" cy="336.4" rx="9" ry="1.3" fill="url(#gSh)"/>
<path d="M222.90 326.00L232.60 334.70" stroke="#0a0a0a" stroke-width="3.6" stroke-linecap="round"/>
<path d="M223.50 325.70L232.80 333.80" stroke="#f4f4f4" stroke-width="1.0" stroke-linecap="round"/>
<circle cx="216.6" cy="320.1" r="7.3" fill="url(#gLens)" stroke="#b2b0ae" stroke-width="1.6"/>
<circle cx="216.6" cy="320.1" r="8.1" fill="none" stroke="#8e8c8a" stroke-opacity="0.8" stroke-width="0.5"/>
<circle cx="216.6" cy="320.1" r="5.9" fill="none" stroke="#e4e2e0" stroke-width="1.1"/>
<rect x="221.7" y="315.3" width="12.1" height="3.7" rx="1" fill="#f06a62" stroke="#c01818" stroke-width="0.9"/>
<circle cx="277.6" cy="324.4" r="11.3" fill="url(#gDisc)" stroke="#0b6fcd" stroke-width="0.8"/>
<circle cx="277.6" cy="324.4" r="9.9" fill="none" stroke="#8ad4fa" stroke-opacity="0.7" stroke-width="0.8"/>
<path d="M273.70 318.2h7.2l-3.6 5.2zM273.70 324.4h7.2l-3.6 6.6z" fill="#38342f"/>
<circle cx="336.6" cy="324.4" r="11.3" fill="url(#gDisc2)" stroke="#0b6fcd" stroke-width="0.8"/>
<circle cx="336.6" cy="324.4" r="9.9" fill="none" stroke="#8ad4fa" stroke-opacity="0.7" stroke-width="0.8"/>
<path d="M333.00 324.1h7.4l-3.7 -6.4zM333.00 330.6h7.4l-3.7 -5.9z" fill="#38342f"/>
<rect x="264.4" y="314.5" width="3" height="19.5" fill="url(#gSm)" opacity="0.7"/>
<rect x="347" y="314.5" width="3" height="19.5" fill="url(#gSm)" opacity="0.7"/>
<rect x="380" y="315" width="3.4" height="20" fill="url(#gSm)"/>
<path d="M381.9 324.9L391 315.4L391.6 319.4H403.6Q404.2 319.4 404.2 320V329.9Q404.2 330.5 403.6 330.5H391.6L391 334.6Z" fill="url(#gGL)" stroke="#559a10" stroke-width="0.9" stroke-linejoin="round"/>
<ellipse cx="451" cy="334.2" rx="12.5" ry="1.3" fill="url(#gSh)"/>
<path d="M463.6 323.5L451.3 313.5L450.7 318.4H438Q437.3 318.4 437.3 319V328.1Q437.3 328.7 438 328.7H450.7L451.3 333.3Z" fill="url(#gGR)" stroke="#559a10" stroke-width="0.9" stroke-linejoin="round"/>
<ellipse cx="508" cy="336.3" rx="10" ry="1.4" fill="url(#gSh)"/>
<path d="M507.9 313L498.2 322.6L502.3 323.2V335.4Q502.3 336 502.9 336H513Q513.6 336 513.6 335.4V323.2L517.7 322.6Z" fill="url(#gGU)" stroke="#559a10" stroke-width="0.9" stroke-linejoin="round"/>
<rect x="571.8" y="312" width="3.4" height="24" fill="url(#gSm)"/>
<path d="M563.4 338.4L553.7 325.2L558.3 324.6V311.9Q558.3 311.3 558.9 311.3H568.2Q568.8 311.3 568.8 311.9V324.6L573.2 325.2Z" fill="url(#gGD)" stroke="#559a10" stroke-width="0.9" stroke-linejoin="round"/>
</svg>
<div class="a btn" style="left:7px;top:945px;width:111px"><span style="display:inline-block;transform:scaleX(0.991);transform-origin:center">Empty Log Window</span></div>
<div class="a btn" style="left:123px;top:945px;width:148px"><span style="display:inline-block;transform:scaleX(0.973);transform-origin:center">Send Log Window to ELog</span></div>
<div class="a btn" style="left:275px;top:945px;width:45px"><span style="display:inline-block;transform:scaleX(0.926);transform-origin:center">Reload</span></div>
<div class="a btn" style="left:324px;top:945px;width:39px"><span style="display:inline-block;transform:scaleX(0.928);transform-origin:center">Reset</span></div>
<div class="a btn" style="left:367px;top:945px;width:89px"><span style="display:inline-block;transform:scaleX(0.967);transform-origin:center">Show Variables</span></div>
<div class="a btn" style="left:461px;top:945px;width:107px"><span style="display:inline-block;transform:scaleX(0.994);transform-origin:center">Show Log Window</span></div>
<div class="a btn" style="left:573px;top:945px;width:88px"><span style="display:inline-block;transform:scaleX(0.951);transform-origin:center">Enable Logging</span></div>
<div class="a btn" style="left:1793px;top:945px;width:120px"><span style="display:inline-block;transform:scaleX(0.993);transform-origin:center">How to use this page</span></div>
<div class="a lbl" style="right:6.8px;top:978px">Last Updated: February 15, 2022 15:31:43</div>
<div class="a hr" style="top:1012px"></div>
<div class="a" style="left:9px;top:1023px;width:2px;height:1px;background:#6b6b6b"></div>
<div class="a" style="left:9px;top:1025px;line-height:20px;color:#0000ee;text-decoration:underline">Home</div>
</div>
</body></html>
